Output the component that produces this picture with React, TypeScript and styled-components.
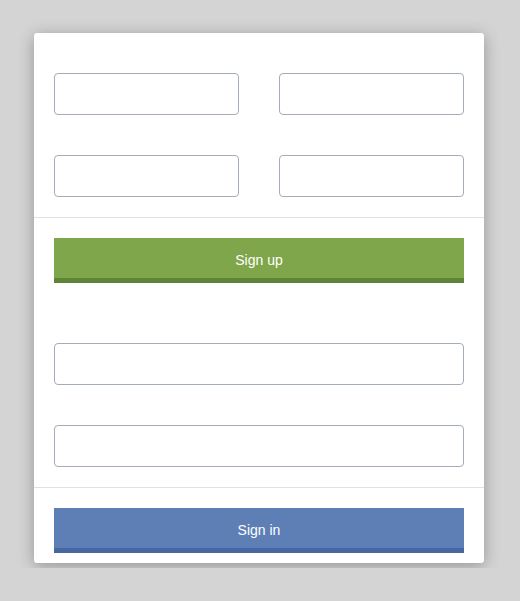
import React from 'react'
import styled, { createGlobalStyle } from 'styled-components'

const GlobalStyle = createGlobalStyle`
  html, body {
    margin: 0;
    padding: 0;
    background: #d4d4d4;
    font-family: "Liberation Sans", Arial, sans-serif;
  }
`

const Page = styled.div`
  padding: 33px 0 0 34px;
  min-height: 568px;
  box-sizing: border-box;
`

const Card = styled.div`
  width: 450px;
  background: #fff;
  border-radius: 3px;
  box-shadow: 0 3px 16px rgba(0, 0, 0, 0.3);
`

const Fields = styled.div<{ $cols: number }>`
  display: grid;
  grid-template-columns: repeat(${p => p.$cols}, 1fr);
  column-gap: 40px;
  row-gap: 40px;
  padding: 40px 20px 20px;
`

const Input = styled.input`
  display: block;
  width: 100%;
  height: 42px;
  box-sizing: border-box;
  border: 1px solid #a3adb8;
  border-radius: 4px;
  background: #fff;
  padding: 0 10px;
  font: inherit;
  font-size: 14px;
  outline: none;
`

const Divider = styled.div`
  height: 1px;
  background: #e1e1e1;
`

const Footer = styled.div<{ $bottom: number }>`
  padding: 20px 20px ${p => p.$bottom}px;
`

const Button = styled.button<{ $bg: string; $edge: string }>`
  display: block;
  width: 100%;
  height: 45px;
  box-sizing: border-box;
  border: none;
  border-bottom: 5px solid ${p => p.$edge};
  border-radius: 0;
  background: ${p => p.$bg};
  color: #fff;
  font-family: "Liberation Sans", Arial, sans-serif;
  font-size: 14px;
  padding: 3px 0 0;
  cursor: pointer;
`

export default function App() {
  return (
    <Page>
      <GlobalStyle />
      <Card>
        <Fields $cols={2}>
          <Input />
          <Input />
          <Input />
          <Input />
        </Fields>
        <Divider />
        <Footer $bottom={20}>
          <Button $bg="#7fa64a" $edge="#5e8537">Sign up</Button>
        </Footer>
        <Fields $cols={1}>
          <Input />
          <Input type="password" />
        </Fields>
        <Divider />
        <Footer $bottom={10}>
          <Button $bg="#5e7eb6" $edge="#4767a0">Sign in</Button>
        </Footer>
      </Card>
    </Page>
  )
}
